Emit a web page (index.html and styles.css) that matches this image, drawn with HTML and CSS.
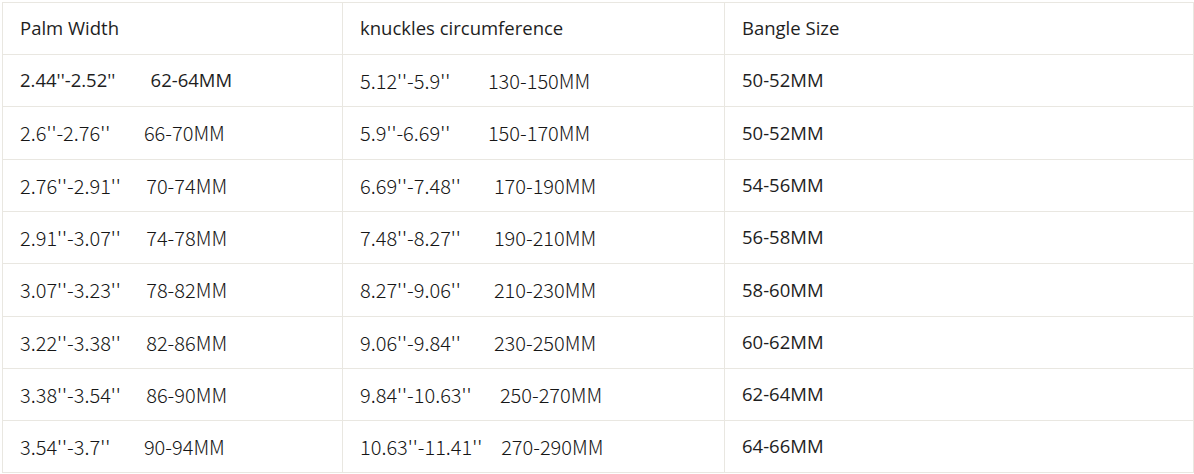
FILE: index.html
```html
<!DOCTYPE html>
<html>
<head>
<meta charset="utf-8">
<link rel="stylesheet" href="styles.css">
</head>
<body>
<div class="wrap">
<table class="size-table">
  <colgroup><col class="c1"><col class="c2"><col class="c3"></colgroup>
  <tr class="head"><td>Palm Width</td><td>knuckles circumference</td><td>Bangle Size</td></tr>
  <tr><td class="wide">2.44''-2.52''        62-64MM</td><td class="narrow">5.12''-5.9''        130-150MM</td><td>50-52MM</td></tr>
  <tr class="r-tall"><td class="narrow">2.6''-2.76''        66-70MM</td><td class="narrow">5.9''-6.69''        150-170MM</td><td>50-52MM</td></tr>
  <tr><td class="narrow">2.76''-2.91''      70-74MM</td><td class="narrow">6.69''-7.48''       170-190MM</td><td>54-56MM</td></tr>
  <tr><td class="narrow">2.91''-3.07''      74-78MM</td><td class="narrow">7.48''-8.27''       190-210MM</td><td>56-58MM</td></tr>
  <tr class="r-tall"><td class="narrow">3.07''-3.23''      78-82MM</td><td class="narrow">8.27''-9.06''       210-230MM</td><td>58-60MM</td></tr>
  <tr><td class="narrow">3.22''-3.38''      82-86MM</td><td class="narrow">9.06''-9.84''       230-250MM</td><td>60-62MM</td></tr>
  <tr><td class="narrow">3.38''-3.54''      86-90MM</td><td class="narrow">9.84''-10.63''      250-270MM</td><td>62-64MM</td></tr>
  <tr><td class="narrow">3.54''-3.7''        90-94MM</td><td class="narrow">10.63''-11.41''    270-290MM</td><td>64-66MM</td></tr>
</table>
</div>
</body>
</html>
```
FILE: styles.css
```css
html, body {
  margin: 0;
  padding: 0;
  background: #ffffff;
}
.wrap {
  padding: 2px 0 0 2px;
}
.size-table {
  border-collapse: collapse;
  table-layout: fixed;
  width: 1191px;
  font-family: "Open Sans", "Noto Sans", sans-serif;
  font-size: 18.5px;
  color: #1e1e1e;
}
.c1 { width: 340px; }
.c2 { width: 382px; }
.c3 { width: 469px; }
.size-table td {
  border: 1px solid #e9e7e1;
  height: 51px;
  padding: 0 0 0 17px;
  vertical-align: middle;
  white-space: pre;
  line-height: 1;
}
.size-table tr.r-tall td {
  height: 52px;
}
.size-table td.wide {
  word-spacing: -0.4px;
}
.size-table td.narrow {
  font-family: "Noto Sans CJK SC", sans-serif;
  font-weight: 300;
  font-size: 20px;
  word-spacing: 0.3px;
  color: #161616;
}
.size-table td.narrow:first-child {
  word-spacing: -0.2px;
}
```
